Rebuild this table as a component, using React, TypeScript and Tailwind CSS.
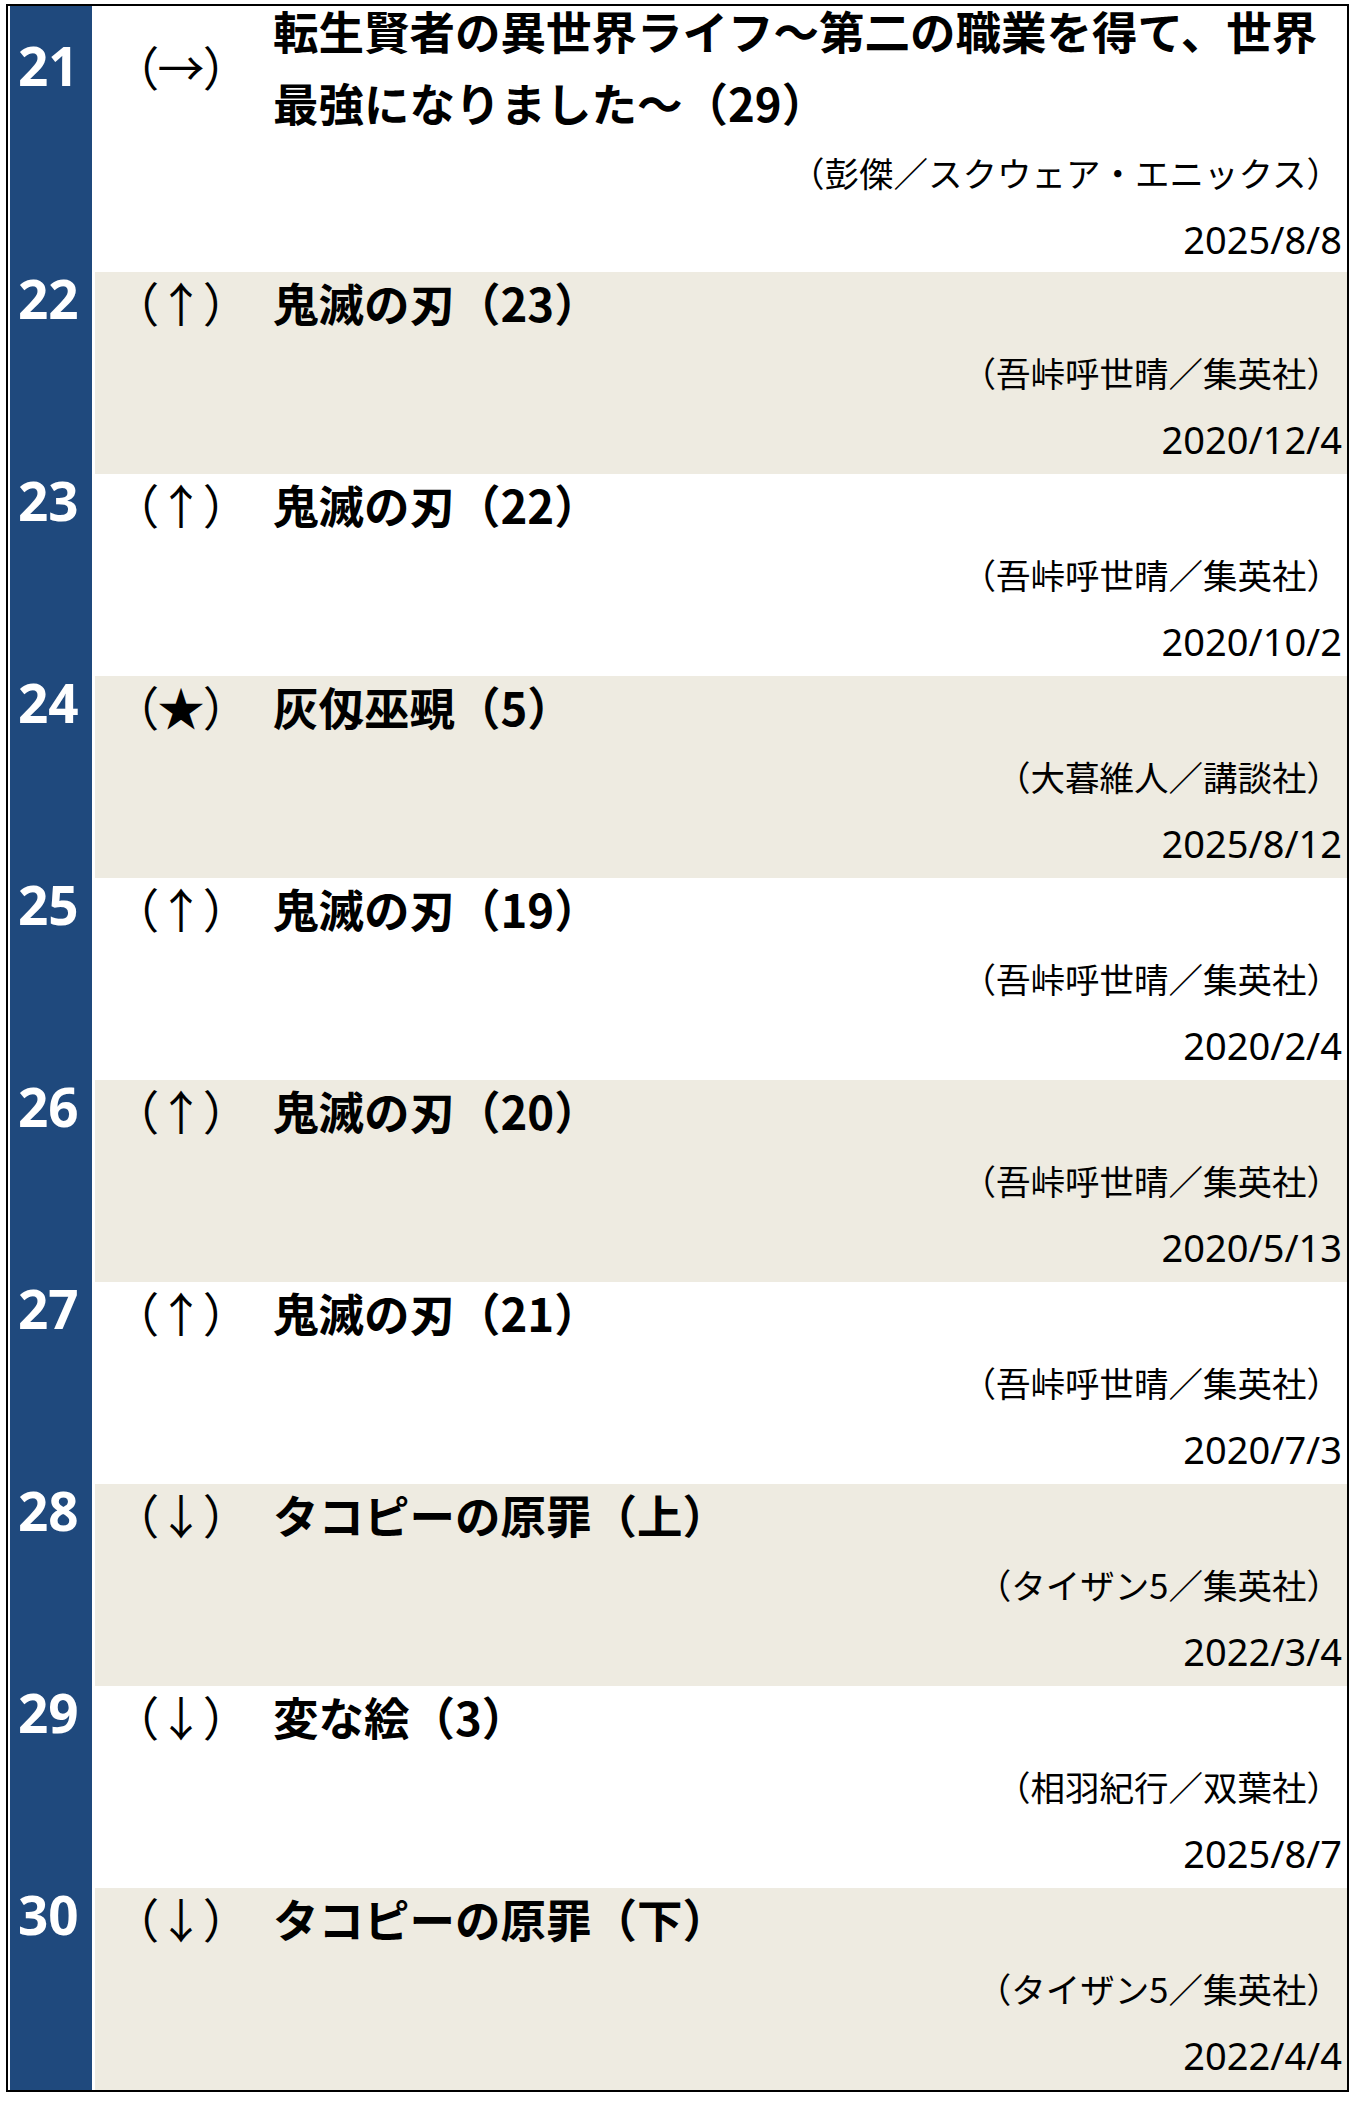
type RankEntry = {
  rank: number;
  move: string;
  title: string;
  author: string;
  date: string;
};

const ENTRIES: RankEntry[] = [
  {
    rank: 21,
    move: "→",
    title: "転生賢者の異世界ライフ～第二の職業を得て、世界最強になりました～（29）",
    author: "（彭傑／スクウェア・エニックス）",
    date: "2025/8/8",
  },
  { rank: 22, move: "↑", title: "鬼滅の刃（23）", author: "（吾峠呼世晴／集英社）", date: "2020/12/4" },
  { rank: 23, move: "↑", title: "鬼滅の刃（22）", author: "（吾峠呼世晴／集英社）", date: "2020/10/2" },
  { rank: 24, move: "★", title: "灰仭巫覡（5）", author: "（大暮維人／講談社）", date: "2025/8/12" },
  { rank: 25, move: "↑", title: "鬼滅の刃（19）", author: "（吾峠呼世晴／集英社）", date: "2020/2/4" },
  { rank: 26, move: "↑", title: "鬼滅の刃（20）", author: "（吾峠呼世晴／集英社）", date: "2020/5/13" },
  { rank: 27, move: "↑", title: "鬼滅の刃（21）", author: "（吾峠呼世晴／集英社）", date: "2020/7/3" },
  { rank: 28, move: "↓", title: "タコピーの原罪（上）", author: "（タイザン5／集英社）", date: "2022/3/4" },
  { rank: 29, move: "↓", title: "変な絵（3）", author: "（相羽紀行／双葉社）", date: "2025/8/7" },
  { rank: 30, move: "↓", title: "タコピーの原罪（下）", author: "（タイザン5／集英社）", date: "2022/4/4" },
];

const JP_FONT = "font-['Noto_Sans_CJK_JP',sans-serif]";

function RankRow({ entry, index }: { entry: RankEntry; index: number }) {
  const shaded = index % 2 === 1;
  const first = index === 0;

  return (
    <div className="grid grid-cols-[82px_1fr] gap-x-[3px] text-black">
      {/* cell backgrounds */}
      <div className="col-start-1 row-start-1 row-span-3 bg-[#1f497d]" />
      <div className={`col-start-2 row-start-1 row-span-3 ${shaded ? "bg-[#eeebe1]" : "bg-white"}`} />

      <div
        className="col-start-1 row-start-1 self-center mb-[12px] pl-[8px] font-['Noto_Sans',sans-serif] text-[53px] font-bold leading-[50px] text-white"
      >
        {entry.rank}
      </div>

      <div className={`col-start-2 row-start-1 flex items-center ${first ? "mt-[-12px]" : "mt-[-6px]"}`}>
        <span
          className={`w-[178px] shrink-0 pl-[39px] ${JP_FONT} text-[47px] leading-[72px] [font-feature-settings:'palt']`}
        >
          （{entry.move}）
        </span>
        <div className={`min-w-0 flex-1 ${JP_FONT} text-[45.5px] font-bold leading-[72px]`}>{entry.title}</div>
      </div>

      <div className={`col-start-2 row-start-2 pr-[6px] text-right ${JP_FONT} text-[34.5px] leading-[68px]`}>
        {entry.author}
      </div>
      <div
        className={`col-start-2 row-start-3 pr-[5px] text-right font-['Noto_Sans',sans-serif] text-[38px] leading-[66px] ${first ? "" : "pb-[2px]"}`}
      >
        {entry.date}
      </div>
    </div>
  );
}

export default function App() {
  return (
    <div className="min-h-[2101px] w-[1356px] bg-white pt-[4px] pl-[6px]">
      <div className="w-[1343px] border-2 border-black pl-[2px]">
        {ENTRIES.map((entry, index) => (
          <RankRow key={entry.rank} entry={entry} index={index} />
        ))}
      </div>
    </div>
  );
}
